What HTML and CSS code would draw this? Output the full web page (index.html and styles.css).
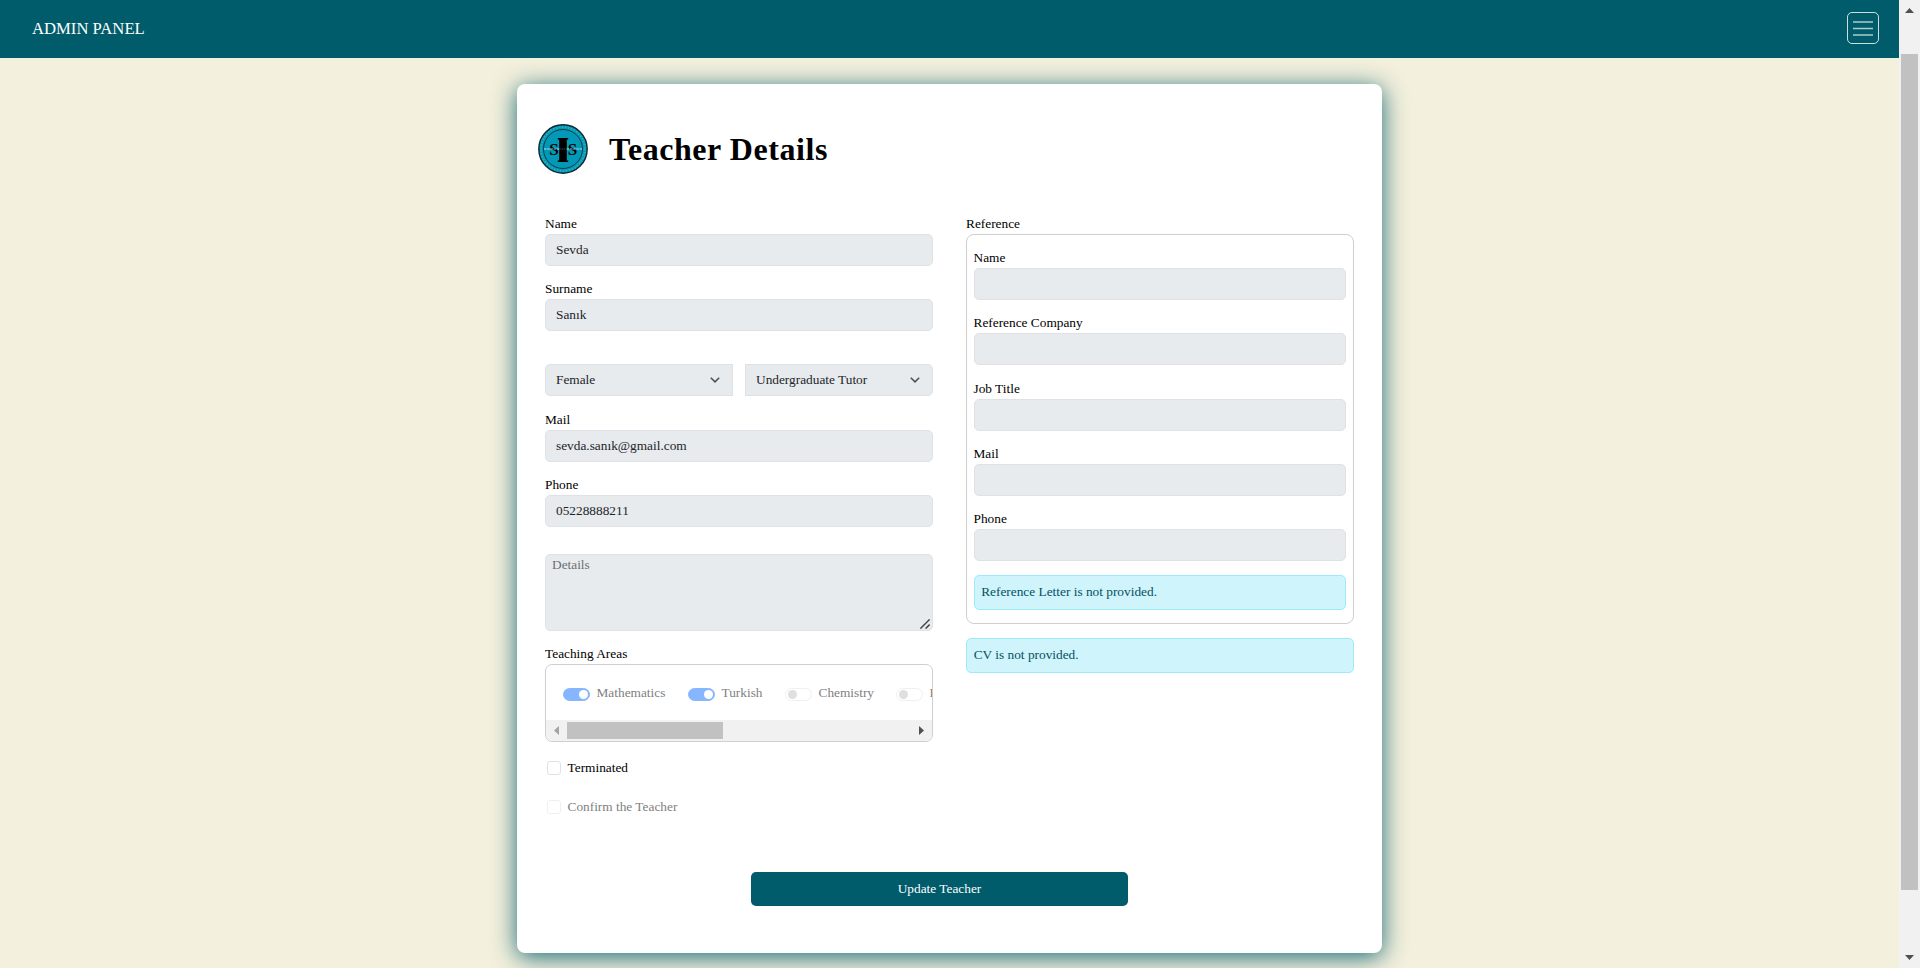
FILE: index.html
```html
<!DOCTYPE html>
<html lang="en">
<head>
<meta charset="utf-8">
<title>Teacher Details</title>
<link rel="stylesheet" href="styles.css">
</head>
<body>
<div class="window">
  <div class="page">
    <nav class="navbar">
      <a class="brand">ADMIN PANEL</a>
      <button class="toggler" aria-label="Menu">
        <svg width="30" height="30" viewBox="0 0 30 30" stroke="#fff" stroke-opacity=".68" stroke-width="1.7"><path d="M5 9H25M5 15.5H25M5 22H25"/></svg>
      </button>
    </nav>
    <main class="card">
      <header class="head">
        <svg class="logo" width="50" height="50" viewBox="0 0 50 50">
          <circle cx="25" cy="25" r="24.2" fill="#0299b6" stroke="#0b2a33" stroke-width="1.4"/>
          <circle cx="25" cy="25" r="22" fill="none" stroke="#3fb2c6" stroke-width="2" stroke-dasharray="1.5 1.5" opacity=".7"/>
          <circle cx="25" cy="25" r="19.5" fill="none" stroke="#0a3d49" stroke-width="1"/>
          <text class="logo-s" x="16" y="30.7" text-anchor="middle">S</text>
          <text class="logo-s" x="34.6" y="30.7" text-anchor="middle">S</text>
          <path d="M19.8 14H30.2V15.5H28.8V36.5H30.2V38H19.8V36.5H21.2V15.5H19.8Z" fill="#000"/>
          <path d="M6 25H21.2M28.8 25H44" stroke="#d5eef2" stroke-width="1.1" stroke-dasharray="2.5 .7" opacity=".85"/>
          <path d="M21.2 25H28.8" stroke="#3b4b4f" stroke-width="1" stroke-dasharray="1.5 .7"/>
        </svg>
        <h1 class="title">Teacher Details</h1>
      </header>
      <div class="columns">
        <section class="col">
          <div class="field"><label class="label">Name</label><input class="control" value="Sevda" disabled></div>
          <div class="field"><label class="label">Surname</label><input class="control" value="Sanık" disabled></div>
          <div class="selects">
            <div class="control select first"><span>Female</span><svg width="10" height="6" viewBox="0 0 10 6" fill="none" stroke="#4b5055" stroke-width="1.5"><path d="M.8.7 5 4.9 9.2.7"/></svg></div>
            <div class="control select last"><span>Undergraduate Tutor</span><svg width="10" height="6" viewBox="0 0 10 6" fill="none" stroke="#4b5055" stroke-width="1.5"><path d="M.8.7 5 4.9 9.2.7"/></svg></div>
          </div>
          <div class="field"><label class="label">Mail</label><input class="control" value="sevda.sanık@gmail.com" disabled></div>
          <div class="field"><label class="label">Phone</label><input class="control" value="05228888211" disabled></div>
          <div class="area"><span>Details</span><svg class="grip" width="10" height="10" viewBox="0 0 10 10" stroke="#3c4043" stroke-width="1.4"><path d="M.4 9.6 9.6.4M5.6 9.6 9.6 5.6"/></svg></div>
          <div class="label">Teaching Areas</div>
          <div class="topics">
            <div class="topic-list">
              <div class="topic math"><i class="switch on"></i>Mathematics</div>
              <div class="topic turkish"><i class="switch on"></i>Turkish</div>
              <div class="topic chem"><i class="switch"></i>Chemistry</div>
              <div class="topic"><i class="switch"></i>History</div>
            </div>
            <div class="hbar">
              <svg width="5" height="9" viewBox="0 0 5 9"><path d="M5 0V9L0 4.5Z" fill="#a3a3a3"/></svg>
              <div class="hthumb"></div>
              <svg class="right" width="5" height="9" viewBox="0 0 5 9"><path d="M0 0V9L5 4.5Z" fill="#505050"/></svg>
            </div>
          </div>
          <div class="check"><i class="box"></i>Terminated</div>
          <div class="check muted"><i class="box"></i>Confirm the Teacher</div>
        </section>
        <section class="col">
          <div class="label">Reference</div>
          <div class="group">
            <div class="field"><label class="label">Name</label><input class="control" disabled></div>
            <div class="field"><label class="label">Reference Company</label><input class="control" disabled></div>
            <div class="field"><label class="label">Job Title</label><input class="control" disabled></div>
            <div class="field"><label class="label">Mail</label><input class="control" disabled></div>
            <div class="field"><label class="label">Phone</label><input class="control" disabled></div>
            <div class="alert">Reference Letter is not provided.</div>
          </div>
          <div class="alert">CV is not provided.</div>
        </section>
      </div>
      <button class="submit">Update Teacher</button>
    </main>
  </div>
  <div class="vbar">
    <svg width="9" height="5" viewBox="0 0 9 5"><path d="M0 5H9L4.5 0Z" fill="#505050"/></svg>
    <div class="vthumb"></div>
    <svg class="down" width="9" height="5" viewBox="0 0 9 5"><path d="M0 0H9L4.5 5Z" fill="#505050"/></svg>
  </div>
</div>
</body>
</html>
```
FILE: styles.css
```css
* { box-sizing: border-box; }
body { margin: 0; font-family: "Liberation Serif", serif; font-size: 13.33px; line-height: 20px; color: #000; }
svg { display: block; flex: none; }
.window { display: flex; height: 968px; overflow: hidden; }
.page { flex: 1; background: #f3f0dd; overflow: hidden; }
.navbar { display: flex; justify-content: space-between; align-items: center; height: 58px; padding: 0 20px 2px 32px; background: #005b6a; }
.brand { padding-top: 2px; color: #fff; font-size: 16.67px; }
.toggler { width: 32px; height: 32px; padding: 0; border: 1px solid rgba(255,255,255,.8); border-radius: 5px; background: none; }

.card { width: 865px; height: 869px; margin: 26px 0 0 517px; padding: 40px 28px 0; border-radius: 8px; background: #fff; box-shadow: 0 4px 25px rgba(0,91,106,.9); }
.head { display: flex; align-items: center; gap: 21px; height: 50px; margin-left: -7px; }
.title { margin: 0; font-size: 32px; line-height: 50px; letter-spacing: .55px; }
.logo-s { font-family: "Liberation Serif", serif; font-size: 17px; font-weight: bold; }

.columns { display: flex; gap: 33px; height: 658px; padding-top: 40px; }
.col { width: 388px; }
.label { display: block; height: 20px; }
.field { margin-bottom: 13.33px; }
.control { display: block; width: 100%; height: 32px; padding: 0 10px; border: 1px solid #dee2e6; border-radius: 5px; background: #e8ebee; color: #212529; font: inherit; opacity: 1; }
.selects { display: flex; gap: 12px; margin: 33px 0 13.67px; }
.select { display: flex; justify-content: space-between; align-items: center; padding-right: 12px; }
.first { border-radius: 5px 0 0 5px; }
.last { border-radius: 0 5px 5px 0; }
.area { position: relative; height: 77px; margin: 26.7px 0 13px; padding: 0 6px; border: 1px solid #dee2e6; border-radius: 5px; background: #e8ebee; color: #6c7075; }
.grip { position: absolute; right: 2px; bottom: 1px; }
.topics { height: 78px; border: 1px solid #cfcfcf; border-radius: 7px; overflow: hidden; }
.topic-list { display: flex; height: 55px; padding: 18px 0 0 17px; color: #7f7f7f; }
.topic { display: flex; flex: none; gap: 6.5px; width: 111px; }
.math { width: 125px; }
.turkish { width: 97px; }
.switch { width: 27px; height: 13px; margin-top: 5px; padding: 2px; border: 1px solid #eeeff1; border-radius: 7px; }
.switch::before { content: ""; display: block; width: 9px; height: 9px; margin-top: -1px; border-radius: 50%; background: #dfdfdf; }
.on { border-color: #86b7fe; background: #86b7fe; }
.on::before { margin-left: 13px; background: #fff; }
.hbar { display: flex; align-items: center; height: 21px; padding: 0 8px; background: #f1f1f1; }
.hthumb { width: 156px; height: 17px; margin-left: 8px; background: #c1c1c1; }
.right { margin-left: auto; }
.check { display: flex; align-items: center; gap: 6.5px; height: 20px; margin: 16px 0 0 2px; }
.box { width: 14px; height: 14px; border: 1px solid #dee2e6; border-radius: 3px; }
.muted { margin-top: 19px; color: #7f7f7f; }
.muted .box { border-color: #eeeff1; }

.group { height: 390px; margin-bottom: 14px; padding: 13px 7px 0 6.5px; border: 1px solid #cfcfcf; border-radius: 8px; }
.alert { height: 35px; padding: 6px 6.7px; border: 1px solid #9eeaf9; border-radius: 5px; background: #cff4fc; color: #055160; }
.submit { display: block; width: 377px; height: 34px; margin: 40px 0 0 206px; border: 0; border-radius: 5px; background: #005b6a; color: #fff; font: inherit; }

.vbar { display: flex; flex-direction: column; align-items: center; width: 21px; padding: 8px 0; background: #f1f1f1; }
.vthumb { width: 17px; height: 836px; margin-top: 41px; background: #c1c1c1; }
.down { margin-top: auto; }
```
